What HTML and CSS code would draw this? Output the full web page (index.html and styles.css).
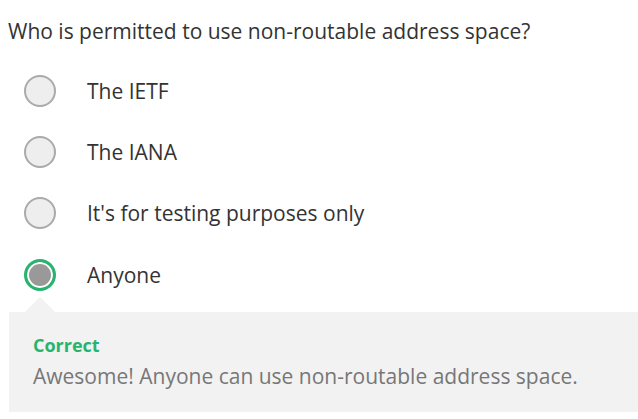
FILE: index.html
```html
<!DOCTYPE html>
<html>
<head>
<meta charset="utf-8">
<link rel="stylesheet" href="styles.css">
</head>
<body>
<div class="quiz">
  <p class="question">Who is permitted to use non-routable address space?</p>
  <ul class="options">
    <li class="option"><span class="radio"></span><span class="label">The IETF</span></li>
    <li class="option"><span class="radio"></span><span class="label">The IANA</span></li>
    <li class="option"><span class="radio"></span><span class="label">It's for testing purposes only</span></li>
    <li class="option"><span class="radio selected"></span><span class="label">Anyone</span></li>
  </ul>
  <div class="feedback">
    <div class="feedback-title">Correct</div>
    <div class="feedback-text">Awesome! Anyone can use non-routable address space.</div>
  </div>
</div>
</body>
</html>
```
FILE: styles.css
```css
html, body {
  margin: 0;
  padding: 0;
  background: #fff;
}
body {
  font-family: "Open Sans", "Noto Sans", sans-serif;
  color: #333;
}
.quiz {
  padding: 17px 0 0 8px;
}
.question {
  margin: 0;
  font-size: 21px;
  line-height: 28px;
}
.options {
  list-style: none;
  margin: 15px 0 0 0;
  padding: 0;
}
.option {
  height: 61.3px;
  display: flex;
  align-items: center;
}
.radio {
  box-sizing: border-box;
  width: 32px;
  height: 32px;
  margin-left: 16px;
  border-radius: 50%;
  border: 2px solid #aaa;
  background: #eee;
  flex: none;
}
.radio.selected {
  border: 3px solid #27b46f;
  background: #999;
  box-shadow: inset 0 0 0 2px #fff;
}
.label {
  margin-left: 31px;
  font-size: 21px;
}
.feedback {
  position: relative;
  margin: 7px 0 0 1px;
  height: 100px;
  box-sizing: border-box;
  padding: 19px 24px 0 24px;
  background: #f2f2f2;
}
.feedback::before {
  content: "";
  position: absolute;
  left: 16px;
  top: -15px;
  border-left: 15px solid transparent;
  border-right: 15px solid transparent;
  border-bottom: 15px solid #f2f2f2;
}
.feedback-title {
  font-weight: 700;
  font-size: 18px;
  line-height: 28px;
  color: #27b46f;
}
.feedback-text {
  font-size: 21px;
  line-height: 34px;
  color: #777;
}
```
